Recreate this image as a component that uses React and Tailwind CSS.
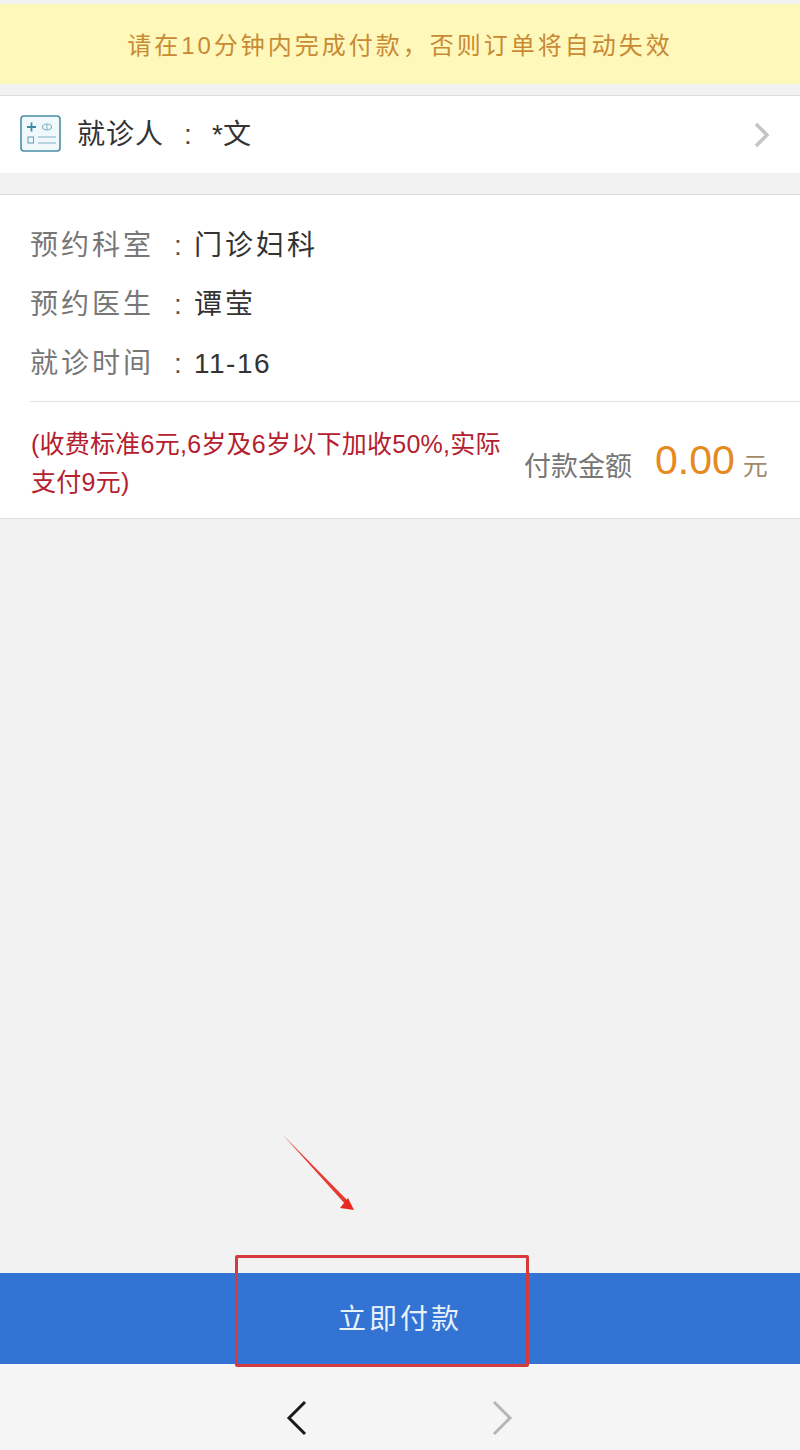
import React from 'react';

const cjk = { fontFamily: '"Liberation Sans", "Noto Sans CJK SC", sans-serif' };

// One line of the appointment details
function InfoRow({ label, value, valueClass = 'tracking-[3px]' }) {
  return (
    <div className="flex h-[59px] items-center text-[28px] leading-none">
      <span className="w-[144px] tracking-[3px] text-[#777777]">{label}</span>
      <span className="w-[20px] text-[#555555]">:</span>
      <span className={`${valueClass} text-[#333333]`}>{value}</span>
    </div>
  );
}

export default function App() {
  return (
    <div className="relative flex h-[1450px] w-[800px] flex-col overflow-hidden bg-[#f2f2f2]" style={cjk}>
      {/* Top warning banner */}
      <div className="mt-[4px] flex h-[80px] items-center justify-center bg-[#fef8ba] pt-[4px] text-[24px] tracking-[3px] text-[#c98a35]">
        请在10分钟内完成付款，否则订单将自动失效
      </div>

      {/* Patient row */}
      <div className="mt-[11px] flex h-[78px] items-center border-t border-[#dddddd] bg-white pb-[3px] pl-[20px] pr-[29px]">
        <svg width="41" height="37" viewBox="0 0 41 37" fill="none" className="shrink-0">
          <rect x="1" y="1" width="39" height="35" rx="3" fill="#f0f8fb" stroke="#4a8ea8" strokeWidth="1.6" />
          <path d="M7 12h9M11.5 7.5v9" stroke="#3f89a6" strokeWidth="1.8" />
          <ellipse cx="27" cy="12" rx="4.5" ry="3" stroke="#7fb0c4" strokeWidth="1.2" />
          <path d="M27 9v6" stroke="#7fb0c4" strokeWidth="1" />
          <rect x="8" y="22" width="5.5" height="6" stroke="#6ea5ba" strokeWidth="1.1" />
          <path d="M18 22h18M18 28h18" stroke="#7fb0c4" strokeWidth="1.2" />
        </svg>
        <div className="ml-[16px] mt-[4px] flex items-center text-[28px] leading-none text-[#333333]">
          <span className="w-[107px] tracking-[1px]">就诊人</span>
          <span className="w-[28px] text-[#444444]">:</span>
          <span>*文</span>
        </div>
        <svg width="18" height="26" viewBox="0 0 18 26" fill="none" className="ml-auto mt-[3px]">
          <path d="M3 2l11 11L3 24" stroke="#c4c4c6" strokeWidth="3.4" />
        </svg>
      </div>

      {/* Appointment details */}
      <div className="mt-[21px] border-y border-[#dddddd] bg-white">
        <div className="ml-[30px] flex h-[207px] flex-col justify-center border-b border-[#e2e2e2] pt-[13px]">
          <InfoRow label="预约科室" value="门诊妇科" />
          <InfoRow label="预约医生" value="谭莹" />
          <InfoRow label="就诊时间" value="11-16" valueClass="tracking-[1.5px]" />
        </div>
        <div className="flex h-[116px] items-center pl-[31px]">
          <p className="mt-[6px] w-[480px] text-[25px] leading-[38px] tracking-[0.25px] text-[#b5202e]">
            (收费标准6元,6岁及6岁以下加收50%,实际
            <br />
            支付9元)
          </p>
          <span className="ml-[13px] mt-[14px] text-[27px] leading-none text-[#777777]">付款金额</span>
          <span className="ml-[23px] text-[41px] leading-none text-[#e58a1f]">0.00</span>
          <span className="ml-[8px] mt-[12px] text-[25px] leading-none text-[#a08a6a]">元</span>
        </div>
      </div>

      {/* Pay button */}
      <div className="mt-auto flex h-[91px] items-center justify-center bg-[#3273d4] pt-[3px] text-[28px] tracking-[3px] text-[#e8f2fb]">
        立即付款
      </div>

      {/* Browser back / forward */}
      <div className="flex h-[86px] items-center justify-center gap-[183px] bg-[#f5f5f5] pr-[1px] pt-[22px]">
        <svg width="22" height="36" viewBox="0 0 22 36" fill="none">
          <path d="M19 2L3 18l16 16" stroke="#1a1a1a" strokeWidth="3" />
        </svg>
        <svg width="22" height="36" viewBox="0 0 22 36" fill="none">
          <path d="M3 2l16 16L3 34" stroke="#b5b5b5" strokeWidth="3" />
        </svg>
      </div>

      {/* Red annotation drawn over the screenshot */}
      <svg width="90" height="90" viewBox="0 0 90 90" fill="none" className="absolute left-[275px] top-[1128px]">
        <path d="M8 7L71 77l3-3z" fill="#e8392f" />
        <path d="M79 82L65 80l8-10z" fill="#e8271f" />
      </svg>
      <div className="absolute left-[235px] top-[1255px] h-[112px] w-[294px] rounded-[2px] border-[3px] border-[#d43a3e]" />
    </div>
  );
}
